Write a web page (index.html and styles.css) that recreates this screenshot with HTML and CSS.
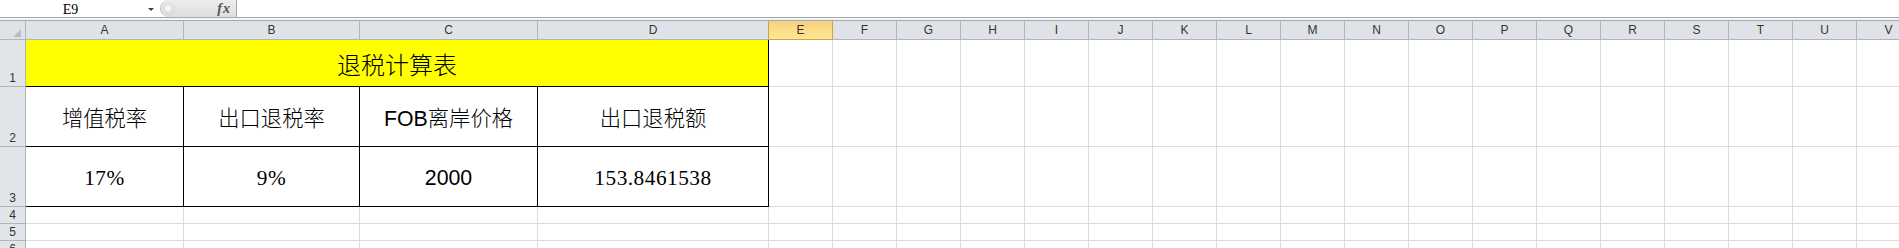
FILE: index.html
```html
<!DOCTYPE html>
<html lang="zh-CN">
<head>
  <meta charset="UTF-8" />
  <meta name="viewport" content="width=device-width, initial-scale=1.0" />
  <title>退税计算表</title>
  <link rel="stylesheet" href="styles.css">
</head>
<body>
  <div class="formula-bar">
    <div class="name-box">
      <span class="name-text">E9</span>
      <span class="name-arrow"></span>
    </div>
    <div class="fx-box">
      <span class="knob"></span>
      <span class="fx">fx</span>
    </div>
    <div class="formula-input"></div>
  </div>
  <div class="bar-gap"></div>

  <div class="sheet">
    <div class="row col-head">
      <div class="corner"></div>
      <div>A</div><div>B</div><div>C</div><div>D</div>
      <div class="sel">E</div>
      <div>F</div><div>G</div><div>H</div><div>I</div><div>J</div><div>K</div>
      <div>L</div><div>M</div><div>N</div><div>O</div><div>P</div><div>Q</div>
      <div>R</div><div>S</div><div>T</div><div>U</div><div>V</div>
    </div>

    <div class="row r1" data-blank="18">
      <div class="rh">1</div>
      <div class="cell tb title">退税计算表</div>
    </div>

    <div class="row r2" data-blank="18">
      <div class="rh">2</div>
      <div class="cell tb head">增值税率</div>
      <div class="cell tb head">出口退税率</div>
      <div class="cell tb head">FOB离岸价格</div>
      <div class="cell tb head">出口退税额</div>
    </div>

    <div class="row r3" data-blank="18">
      <div class="rh">3</div>
      <div class="cell tb num">17%</div>
      <div class="cell tb num">9%</div>
      <div class="cell tb num sans">2000</div>
      <div class="cell tb num">153.8461538</div>
    </div>

    <div class="row small" data-blank="22"><div class="rh">4</div></div>
    <div class="row small" data-blank="22"><div class="rh">5</div></div>
    <div class="row small" data-blank="22"><div class="rh">6</div></div>
  </div>

  <script>
    document.querySelectorAll('.row[data-blank]').forEach(row => {
      const n = +row.dataset.blank;
      for (let i = 0; i < n; i++) {
        let c = document.createElement('div');
        c.className = 'cell';
        row.appendChild(c);
      }
    });
  </script>
</body>
</html>
```

FILE: styles.css
```css
body {
  margin: 0;
  width: 1899px;
  height: 248px;
  overflow: hidden;
  background: #fff;
  color: #000;
  font-family: "Liberation Sans", "Noto Sans CJK SC", sans-serif;
}

/* formula bar */
.formula-bar {
  display: flex;
  height: 17px;
  border-bottom: 1px solid #a3a9b1;
}

.name-box {
  display: flex;
  width: 160px;
}

.name-text {
  width: 141px;
  text-align: center;
  font-family: "Liberation Serif", serif;
  font-size: 14px;
  line-height: 14px;
  padding-top: 3px;
}

.name-arrow {
  width: 0;
  height: 0;
  margin: 8px 0 0 7px;
  border-left: 3px solid transparent;
  border-right: 3px solid transparent;
  border-top: 3px solid #3c3c3c;
}

.fx-box {
  display: flex;
  align-items: center;
  justify-content: space-between;
  box-sizing: border-box;
  width: 77px;
  padding: 0 5px 0 3px;
  background: linear-gradient(#ededed, #dedede);
  border-left: 1px solid #c2c2c2;
  border-right: 1px solid #a7a7a7;
  border-radius: 9px 0 0 9px;
}

.knob {
  width: 10px;
  height: 10px;
  border-radius: 50%;
  background: radial-gradient(circle at 40% 40%, #fdfdfd, #cdcdcd);
  box-shadow: 0 0 0 1px #d6d6d6;
}

.fx {
  font-family: "Liberation Serif", serif;
  font-style: italic;
  font-weight: bold;
  font-size: 14px;
  letter-spacing: 1px;
  color: #555;
}

.formula-input {
  flex: 1;
}

.bar-gap {
  height: 2px;
  background: #f4f5f6;
}

/* sheet grid */
.sheet {
  border-top: 1px solid #a3a9b1;
}

.row {
  display: grid;
  grid-template-columns: 26px 158px 176px 178px 231px repeat(18, 64px);
}

.row > div {
  box-sizing: border-box;
  border-right: 1px solid #dadcdd;
  border-bottom: 1px solid #dadcdd;
}

.col-head {
  height: 19px;
}

.col-head > div {
  background: #dfe3e8;
  border-color: #b1b5ba;
  color: #333;
  font-size: 12px;
  line-height: 18px;
  text-align: center;
}

.col-head .corner {
  position: relative;
}

.corner::after {
  content: '';
  position: absolute;
  right: 4px;
  bottom: 2px;
  width: 0;
  height: 0;
  border-left: 8px solid transparent;
  border-bottom: 8px solid #b9bdc3;
}

.col-head .sel {
  background: linear-gradient(#f8d17c, #fde894);
  border-color: #d59f43;
  box-shadow: -1px 0 0 #d59f43;
}

.row > .rh {
  display: flex;
  align-items: flex-end;
  justify-content: center;
  padding-bottom: 1px;
  background: #e1e5ea;
  border-color: #b1b5ba;
  color: #333;
  font-size: 12px;
  line-height: 14px;
}

.r1 { height: 47px; }
.r2 { height: 60px; }
.r3 { height: 60px; }
.small { height: 17px; }

.row > .tb {
  display: flex;
  align-items: center;
  justify-content: center;
  border-right-color: #000;
  border-bottom-color: #000;
  white-space: nowrap;
}

.title {
  grid-column: span 4;
  background: #ffff00;
  font-size: 24px;
  font-weight: 300;
}

.head {
  font-size: 21.3px;
  font-weight: 300;
}

.num {
  padding-top: 3px;
  font-family: "Liberation Serif", serif;
  font-size: 21.3px;
  letter-spacing: 0.5px;
}

.num.sans {
  font-family: "Liberation Sans", sans-serif;
  letter-spacing: 0;
}
```
